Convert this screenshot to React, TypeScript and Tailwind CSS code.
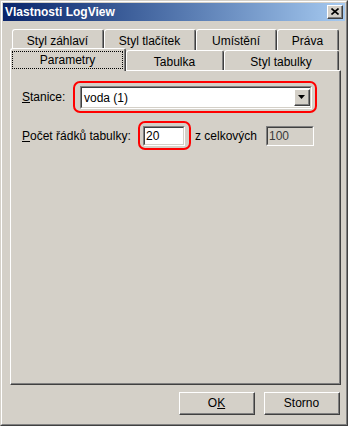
import React from 'react';

const raised = 'border border-t-white border-l-white border-b-[#404040] border-r-[#404040]';

const Tab: React.FC<{ label: string; w: string; selected?: boolean; focus?: boolean }> = ({ label, w, selected, focus }) => (
  <div
    className={`${w} ${selected ? 'h-[23px] -mb-[1px] relative z-10' : 'h-full'} shrink-0 flex justify-center bg-[#d4d0c8] border-t border-l border-r border-t-white border-l-white border-r-[#404040] rounded-t-[3px]`}
  >
    <div className={`flex-1 flex border-r ${selected ? 'border-r-[#808080] pt-[2px] px-[1px]' : 'border-r-[#808080] items-center justify-center pt-[2px]'}`}>
      {focus ? (
        <div className="flex-1 h-[18px] border border-dotted border-black flex items-center justify-center">{label}</div>
      ) : (
        <span>{label}</span>
      )}
    </div>
  </div>
);

const Button: React.FC<{ children: React.ReactNode }> = ({ children }) => (
  <div className={`w-[76px] h-[23px] ${raised}`}>
    <div className="w-full h-full border-b border-r border-b-[#808080] border-r-[#808080] flex items-center justify-center">
      {children}
    </div>
  </div>
);

export default function App() {
  return (
    <div
      className="w-[348px] h-[426px] bg-[#d4d0c8] border border-t-[#d4d0c8] border-l-[#d4d0c8] border-b-[#404040] border-r-[#404040] text-[12px] text-black leading-none"
      style={{ fontFamily: '"Liberation Sans", Arial, sans-serif' }}
    >
      <div className="w-full h-full border border-t-white border-l-white border-b-[#808080] border-r-[#808080] p-[1px] flex flex-col">
        {/* title bar */}
        <div className="h-[18px] shrink-0 flex items-center justify-between bg-gradient-to-r from-[#0a246a] to-[#a6caf0] pl-[2px] pr-[2px]">
          <span className="text-white font-bold text-[12px]">Vlastnosti LogView</span>
          <div className={`w-[16px] h-[14px] bg-[#d4d0c8] ${raised}`}>
            <div className="w-full h-full border-b border-r border-b-[#808080] border-r-[#808080] flex items-center justify-center">
              <svg width="8" height="7" viewBox="0 0 8 7">
                <path d="M0.5 0.5 L7.5 6.5 M7.5 0.5 L0.5 6.5" stroke="#000" strokeWidth="1.6" />
              </svg>
            </div>
          </div>
        </div>

        {/* tabs */}
        <div className="mt-[8px] ml-[9px] h-[21px] flex">
          <Tab label="Styl záhlaví" w="w-[92px]" />
          <Tab label="Styl tlačítek" w="w-[92px]" />
          <Tab label="Umístění" w="w-[81px]" />
          <Tab label="Práva" w="w-[62px]" />
        </div>
        <div className="ml-[7px] h-[20px] flex items-end">
          <Tab label="Parametry" w="w-[116px]" selected focus />
          <Tab label="Tabulka" w="w-[98px]" />
          <Tab label="Styl tabulky" w="w-[115px]" />
        </div>

        {/* panel */}
        <div className="ml-[7px] w-[331px] h-[315px] border border-t-white border-l-white border-b-[#404040] border-r-[#404040]">
          <div className="w-full h-full border-b border-r border-b-[#808080] border-r-[#808080] pl-[11px] pt-[10px] flex flex-col gap-[8px]">
            <div className="flex items-center">
              <span className="w-[51px]"><span className="underline">S</span>tanice:</span>
              <div className="w-[244px] h-[32px] border-2 border-[#ff0000] rounded-[7px] pl-[5px] pr-[3px] pt-[3px]">
                <div className="h-[23px] bg-white border border-t-[#808080] border-l-[#808080] border-b-white border-r-white">
                  <div className="h-full border border-t-[#404040] border-l-[#404040] border-b-[#d4d0c8] border-r-[#d4d0c8] flex items-center justify-between pl-[2px]">
                    <span>voda (1)</span>
                    <div className={`w-[16px] h-[17px] bg-[#d4d0c8] ${raised}`}>
                      <div className="w-full h-full border-b border-r border-b-[#808080] border-r-[#808080] flex items-center justify-center">
                        <svg width="7" height="4" viewBox="0 0 7 4">
                          <path d="M0 0 H7 L3.5 4 Z" fill="#000" />
                        </svg>
                      </div>
                    </div>
                  </div>
                </div>
              </div>
            </div>

            <div className="flex items-center">
              <span className="w-[116px]"><span className="underline">P</span>očet řádků tabulky:</span>
              <div className="w-[53px] h-[29px] border-2 border-[#ff0000] rounded-[7px] pl-[3px] flex items-center">
                <div className="w-[42px] h-[20px] bg-white border border-t-[#808080] border-l-[#808080] border-b-white border-r-white">
                  <div className="h-full border border-t-[#404040] border-l-[#404040] border-b-[#d4d0c8] border-r-[#d4d0c8] flex items-center pl-[1px]">
                    20
                  </div>
                </div>
              </div>
              <span className="ml-[4px] w-[71px]">z celkových</span>
              <div className="w-[48px] h-[20px] border border-t-[#808080] border-l-[#808080] border-b-white border-r-white">
                <div className="h-full border border-t-[#404040] border-l-[#404040] border-b-[#d4d0c8] border-r-[#d4d0c8] flex items-center pl-[1px] text-[#3a3a3a]">
                  100
                </div>
              </div>
            </div>
          </div>
        </div>

        {/* buttons */}
        <div className="mt-[7px] flex justify-end gap-[9px] pr-[5px]">
          <Button>
            O<span className="underline">K</span>
          </Button>
          <Button>Storno</Button>
        </div>
      </div>
    </div>
  );
}
